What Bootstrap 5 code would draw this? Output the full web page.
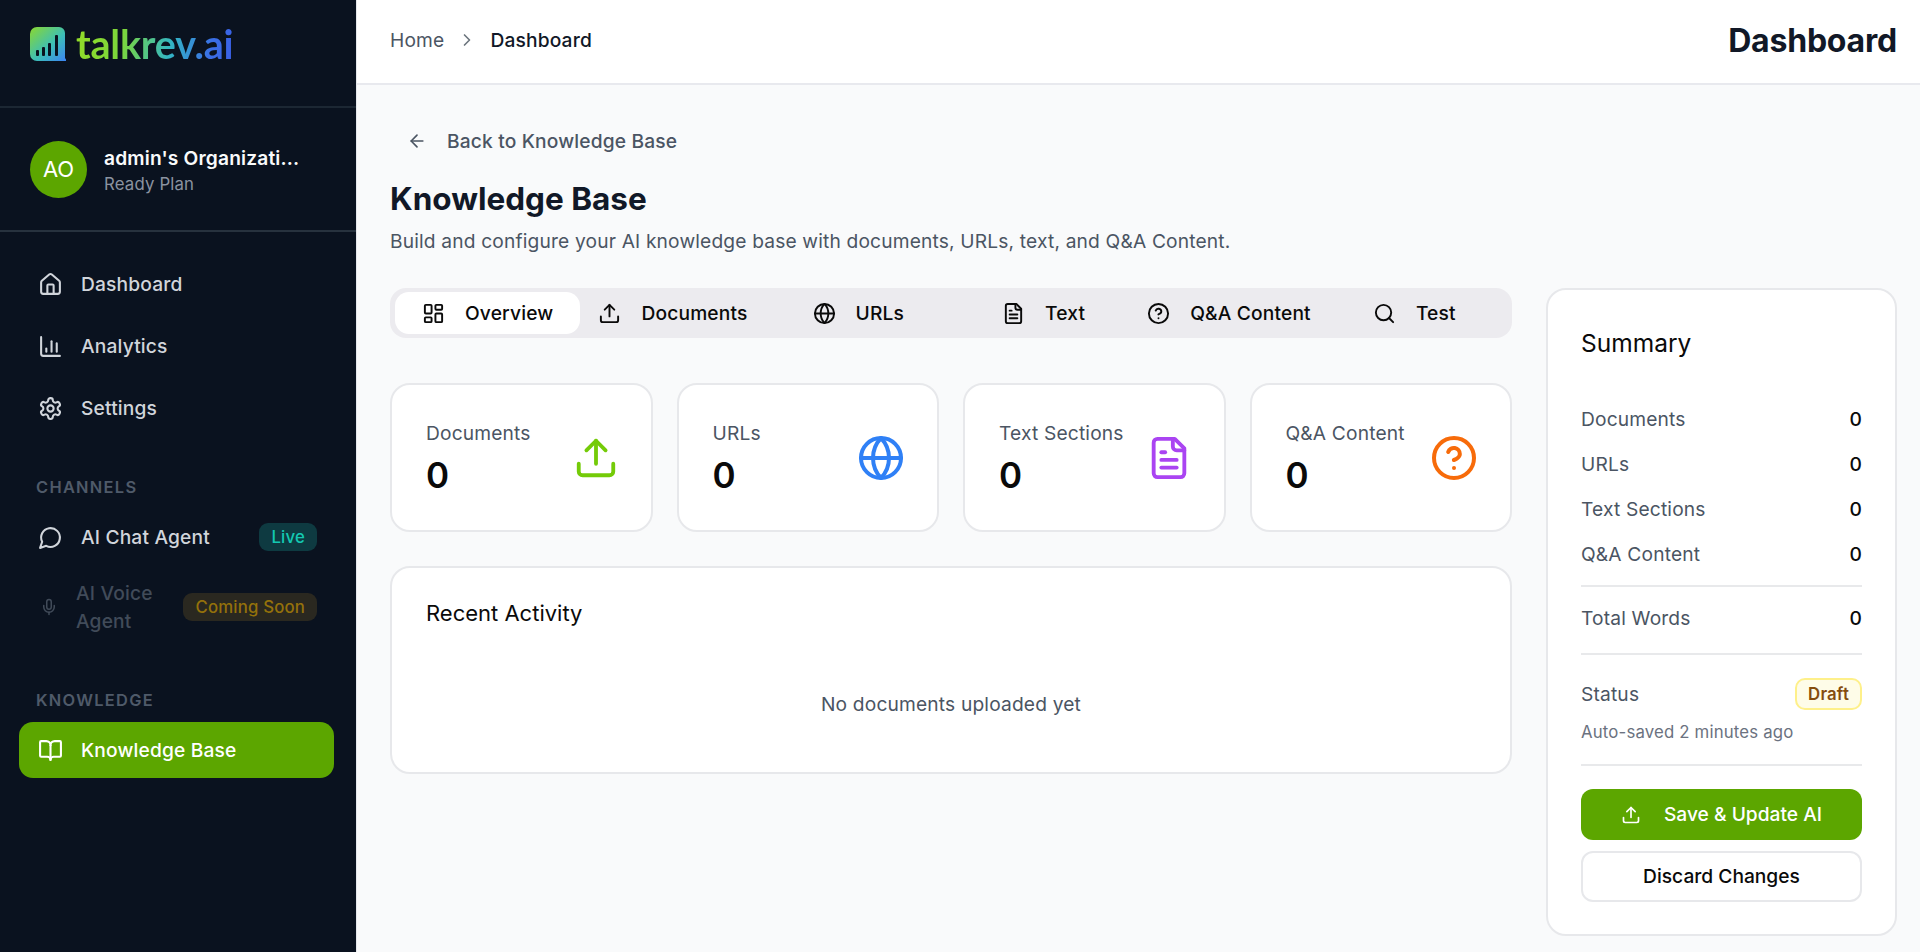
<!DOCTYPE html>
<html lang="en">
<head>
<meta charset="utf-8">
<title>Knowledge Base</title>
<link href="https://cdn.jsdelivr.net/npm/bootstrap@5.3.0/dist/css/bootstrap.min.css" rel="stylesheet">
<style>
html,body{height:952px;overflow:hidden}
body{font-family:Inter,"Liberation Sans",sans-serif;background:#f9fafb;color:#111827;letter-spacing:.01em}
.ico{fill:none;stroke:currentColor;stroke-width:2;stroke-linecap:round;stroke-linejoin:round;flex:none}
.shell{height:952px}
.side{width:357px;flex:none;background:#0a121f;border-right:1px solid #e5e7eb;height:952px}
.brand{height:108px;border-bottom:2px solid #1c2733;padding:27px 0 0 30px;gap:10px}
.brand-word{font-family:Lato,sans-serif;font-weight:700;font-size:39.5px;line-height:34px;letter-spacing:-.2px;background:linear-gradient(100deg,#93dc28 0%,#7bd63c 30%,#33b6c4 60%,#3a6fe6 85%,#3a5fe6 100%);-webkit-background-clip:text;background-clip:text;color:transparent}
.org{height:124px;border-bottom:2px solid #27323e;padding-left:30px;gap:17px}
.avatar{width:57px;height:57px;border-radius:50%;background:#5ca600;color:#fff;font-size:22px;letter-spacing:0}
.org-text{padding-top:4px}
.org-name{font-size:19.2px;font-weight:600;color:#f9fafb;line-height:27px}
.org-plan{font-size:16.8px;color:#8b93a0;line-height:25px}
.navi{height:56px;margin:0 22px 0 19px;padding-left:19px;gap:18px;color:#d1d5db;font-size:19.2px;font-weight:500;text-decoration:none;border-radius:14px}
.navi-first{margin-top:24px}
.navi+.navi{margin-top:6px}
.sec-label{font-size:16.4px;font-weight:600;letter-spacing:1.3px;color:#4f5a69;padding-left:36px;line-height:20px}
.sec-chan{margin-top:41px;margin-bottom:12px}
.sec-know{margin-top:51px;margin-bottom:12px}
.pill-live,.pill-soon{font-size:16.8px;font-weight:500;line-height:28px;border-radius:9px;padding:0 12px;margin-left:auto;margin-right:17px}
.pill-live{background:#0e3a41;color:#14c7b1}
.pill-soon{background:#2a2820;color:#94710b;white-space:nowrap}
.navi+.navi-off{margin-top:10px}
.navi-off{color:#414b59;height:64px;padding-left:21px;gap:18px;line-height:28px}
.navi-on{background:#5ca600;color:#fff}
.topbar{height:85px;background:#fff;border-bottom:2px solid #e8e9ee;padding:0 23px 2px 33px}
.crumbs{gap:13px}
.crumb{font-size:19.2px;color:#4b5563}
.crumb-now{font-size:19.2px;font-weight:500;color:#111827}
.top-title{font-size:32px;font-weight:700;color:#111827;letter-spacing:-.2px}
.work{flex:1;min-width:0}
.pagebody{padding:0 23px 0 33px}
.back{font-size:19.2px;font-weight:500;color:#4b5563;height:40px;margin-top:36px;padding-left:17px;gap:20px}
.pg-title{font-size:31.5px;font-weight:700;color:#111827;line-height:38px;margin:19px 0 0;letter-spacing:0}
.pg-sub{font-size:19.2px;color:#4b5563;line-height:26px;margin:10px 0 0}
.cols{gap:34px;margin-top:34px}
.leftcol{width:1122px;flex:none}
.tabs{background:#ecebef;border-radius:16px;height:50px;padding:4px 5px;display:grid;grid-template-columns:repeat(6,1fr)}
.tabbtn{font-size:19.2px;font-weight:500;color:#0a0a0a;gap:20px;border-radius:14px}
.tab-on{background:#fff}
.panel{background:#fff;border:2px solid #e7e8eb;border-radius:20px}
.stat{height:149px;padding:0 32px 0 34px}
.stat-name{font-size:19.2px;color:#4b5563;line-height:26px}
.stat-num{font-size:35px;font-weight:600;color:#0a0a0a;line-height:42px;margin-top:8px}
.ic-green{color:#74cb08}.ic-blue{color:#2f80f6}.ic-purple{color:#aa44f2}.ic-orange{color:#f76b0a}
.stats{margin-top:21px}
.recent{height:208px;margin-top:34px;padding:0 34px}
.recent-h{font-size:22px;font-weight:400;color:#0a0a0a;line-height:30px;margin-top:30px;letter-spacing:0}
.recent-e{font-size:19.2px;color:#4b5563;line-height:26px;margin-top:63px}
.summary{width:351px;height:648px;flex:none;padding:0 33px}
.sum-h{font-size:24.5px;font-weight:400;color:#0a0a0a;line-height:32px;margin:37px 0 47px;letter-spacing:0}
.sum-row{font-size:19.2px;color:#4b5563;line-height:26px;height:45px}
.sum-row b{font-weight:500;color:#0a0a0a}
.sum-last{height:44px}
.sum-total{height:66px;padding-bottom:5px}
.sum-status{height:auto}
.rule{height:2px;background:#e8e9eb;flex:none}
.status-line{margin-top:23px}
.draft{font-size:16.8px;font-weight:600;line-height:28px;color:#854d0e;background:#fefce8;border:2px solid #fef08a;border-radius:10px;padding:0 11px}
.saved{font-size:16.8px;color:#6b7280;line-height:22px;margin-top:11px}
.rule-low{margin-top:21px}
.btn-save{background:#5ca600;color:#fff;font-size:19.2px;font-weight:500;height:51px;border-radius:12px;gap:23px;border:0;margin-top:23px}
.btn-drop{background:#fff;color:#0a0a0a;font-size:19.2px;font-weight:500;height:51px;border-radius:12px;border:2px solid #e7e8eb;margin-top:11px}
</style>
</head>
<body>
<svg width="0" height="0" class="position-absolute">
<symbol id="i-home" viewBox="0 0 24 24"><path d="M15 21v-8a1 1 0 0 0-1-1h-4a1 1 0 0 0-1 1v8"/><path d="M3 10a2 2 0 0 1 .709-1.528l7-5.999a2 2 0 0 1 2.582 0l7 5.999A2 2 0 0 1 21 10v9a2 2 0 0 1-2 2H5a2 2 0 0 1-2-2z"/></symbol>
<symbol id="i-chart" viewBox="0 0 24 24"><path d="M3 3v16a2 2 0 0 0 2 2h16"/><path d="M8 17v-3"/><path d="M13 17V7"/><path d="M18 17V9"/></symbol>
<symbol id="i-gear" viewBox="0 0 24 24"><path d="M12.22 2h-.44a2 2 0 0 0-2 2v.18a2 2 0 0 1-1 1.73l-.43.25a2 2 0 0 1-2 0l-.15-.08a2 2 0 0 0-2.73.73l-.22.38a2 2 0 0 0 .73 2.73l.15.1a2 2 0 0 1 1 1.72v.51a2 2 0 0 1-1 1.74l-.15.09a2 2 0 0 0-.73 2.73l.22.38a2 2 0 0 0 2.73.73l.15-.08a2 2 0 0 1 2 0l.43.25a2 2 0 0 1 1 1.73V20a2 2 0 0 0 2 2h.44a2 2 0 0 0 2-2v-.18a2 2 0 0 1 1-1.73l.43-.25a2 2 0 0 1 2 0l.15.08a2 2 0 0 0 2.73-.73l.22-.39a2 2 0 0 0-.73-2.73l-.15-.08a2 2 0 0 1-1-1.74v-.5a2 2 0 0 1 1-1.74l.15-.09a2 2 0 0 0 .73-2.73l-.22-.38a2 2 0 0 0-2.73-.73l-.15.08a2 2 0 0 1-2 0l-.43-.25a2 2 0 0 1-1-1.73V4a2 2 0 0 0-2-2z"/><circle cx="12" cy="12" r="3"/></symbol>
<symbol id="i-chat" viewBox="0 0 24 24"><path d="M7.9 20A9 9 0 1 0 4 16.1L2 22Z"/></symbol>
<symbol id="i-mic" viewBox="0 0 24 24"><path d="M12 2a3 3 0 0 0-3 3v7a3 3 0 0 0 6 0V5a3 3 0 0 0-3-3Z"/><path d="M19 10v2a7 7 0 0 1-14 0v-2"/><line x1="12" x2="12" y1="19" y2="22"/></symbol>
<symbol id="i-book" viewBox="0 0 24 24"><path d="M12 7v14"/><path d="M3 18a1 1 0 0 1-1-1V4a1 1 0 0 1 1-1h5a4 4 0 0 1 4 4 4 4 0 0 1 4-4h5a1 1 0 0 1 1 1v13a1 1 0 0 1-1 1h-6a3 3 0 0 0-3 3 3 3 0 0 0-3-3z"/></symbol>
<symbol id="i-grid" viewBox="0 0 24 24"><rect width="7" height="9" x="3" y="3" rx="1"/><rect width="7" height="5" x="14" y="3" rx="1"/><rect width="7" height="9" x="14" y="12" rx="1"/><rect width="7" height="5" x="3" y="16" rx="1"/></symbol>
<symbol id="i-up" viewBox="0 0 24 24"><path d="M21 15v4a2 2 0 0 1-2 2H5a2 2 0 0 1-2-2v-4"/><polyline points="17 8 12 3 7 8"/><line x1="12" x2="12" y1="3" y2="15"/></symbol>
<symbol id="i-globe" viewBox="0 0 24 24"><circle cx="12" cy="12" r="10"/><path d="M12 2a14.5 14.5 0 0 0 0 20 14.5 14.5 0 0 0 0-20"/><path d="M2 12h20"/></symbol>
<symbol id="i-file" viewBox="0 0 24 24"><path d="M15 2H6a2 2 0 0 0-2 2v16a2 2 0 0 0 2 2h12a2 2 0 0 0 2-2V7Z"/><path d="M14 2v4a2 2 0 0 0 2 2h4"/><path d="M10 9H8"/><path d="M16 13H8"/><path d="M16 17H8"/></symbol>
<symbol id="i-help" viewBox="0 0 24 24"><circle cx="12" cy="12" r="10"/><path d="M9.09 9a3 3 0 0 1 5.83 1c0 2-3 3-3 3"/><path d="M12 17h.01"/></symbol>
<symbol id="i-search" viewBox="0 0 24 24"><circle cx="11" cy="11" r="8"/><path d="m21 21-4.3-4.3"/></symbol>
<symbol id="i-left" viewBox="0 0 24 24"><path d="m12 19-7-7 7-7"/><path d="M19 12H5"/></symbol>
<symbol id="i-right" viewBox="0 0 24 24"><path d="m9 18 6-6-6-6"/></symbol>
</svg>
<div class="d-flex shell">
  <aside class="side">
    <div class="brand d-flex align-items-start">
      <svg width="36" height="35" viewBox="0 0 36 35">
        <defs><linearGradient id="lg" x1="0" y1="0" x2="1" y2="1"><stop offset="0" stop-color="#8bd82f"/><stop offset=".55" stop-color="#3dbfb5"/><stop offset="1" stop-color="#3b82f6"/></linearGradient></defs>
        <path d="M7 0h22a6 6 0 0 1 6 6v25l2 3H7a7 7 0 0 1-7-7V7a7 7 0 0 1 7-7z" fill="url(#lg)"/>
        <g fill="#0a121f"><rect x="6" y="23" width="3" height="6" rx="1"/><rect x="12" y="20" width="3" height="9" rx="1"/><rect x="18" y="16" width="3" height="13" rx="1"/><rect x="25" y="8" width="3" height="21" rx="1"/></g>
      </svg>
      <span class="brand-word">talkrev.ai</span>
    </div>
    <div class="org d-flex align-items-center">
      <div class="avatar d-flex align-items-center justify-content-center">AO</div>
      <div class="org-text">
        <div class="org-name">admin's Organizati...</div>
        <div class="org-plan">Ready Plan</div>
      </div>
    </div>
    <a class="navi navi-first d-flex align-items-center" href="#"><svg class="ico" width="25" height="25"><use href="#i-home"/></svg>Dashboard</a>
    <a class="navi d-flex align-items-center" href="#"><svg class="ico" width="25" height="25"><use href="#i-chart"/></svg>Analytics</a>
    <a class="navi d-flex align-items-center" href="#"><svg class="ico" width="25" height="25"><use href="#i-gear"/></svg>Settings</a>
    <div class="sec-label sec-chan text-uppercase">Channels</div>
    <a class="navi d-flex align-items-center" href="#"><svg class="ico" width="25" height="25"><use href="#i-chat"/></svg>AI Chat Agent<span class="pill-live">Live</span></a>
    <a class="navi navi-off d-flex align-items-center" href="#"><svg class="ico" width="18" height="24"><use href="#i-mic"/></svg><span>AI Voice<br>Agent</span><span class="pill-soon">Coming Soon</span></a>
    <div class="sec-label sec-know text-uppercase">Knowledge</div>
    <a class="navi navi-on d-flex align-items-center" href="#"><svg class="ico" width="25" height="25"><use href="#i-book"/></svg>Knowledge Base</a>
  </aside>
  <main class="work">
    <header class="topbar d-flex align-items-center justify-content-between">
      <nav class="d-flex align-items-center crumbs">
        <span class="crumb">Home</span>
        <svg class="ico text-secondary" width="20" height="20"><use href="#i-right"/></svg>
        <span class="crumb-now">Dashboard</span>
      </nav>
      <div class="top-title">Dashboard</div>
    </header>
    <div class="pagebody">
      <div class="back d-flex align-items-center"><svg class="ico" width="20" height="20"><use href="#i-left"/></svg>Back to Knowledge Base</div>
      <h1 class="pg-title">Knowledge Base</h1>
      <p class="pg-sub">Build and configure your AI knowledge base with documents, URLs, text, and Q&amp;A Content.</p>
      <div class="d-flex align-items-start cols">
        <div class="leftcol">
          <div class="tabs">
            <div class="tabbtn tab-on d-flex align-items-center justify-content-center"><svg class="ico" width="23" height="23"><use href="#i-grid"/></svg>Overview</div>
            <div class="tabbtn d-flex align-items-center justify-content-center"><svg class="ico" width="23" height="23"><use href="#i-up"/></svg>Documents</div>
            <div class="tabbtn d-flex align-items-center justify-content-center"><svg class="ico" width="23" height="23"><use href="#i-globe"/></svg>URLs</div>
            <div class="tabbtn d-flex align-items-center justify-content-center"><svg class="ico" width="23" height="23"><use href="#i-file"/></svg>Text</div>
            <div class="tabbtn d-flex align-items-center justify-content-center"><svg class="ico" width="23" height="23"><use href="#i-help"/></svg>Q&amp;A Content</div>
            <div class="tabbtn d-flex align-items-center justify-content-center"><svg class="ico" width="23" height="23"><use href="#i-search"/></svg>Test</div>
          </div>
          <div class="row g-4 stats">
            <div class="col-3"><div class="panel stat d-flex align-items-center justify-content-between"><div><div class="stat-name">Documents</div><div class="stat-num">0</div></div><svg class="ico ic-green" width="46" height="46"><use href="#i-up"/></svg></div></div>
            <div class="col-3"><div class="panel stat d-flex align-items-center justify-content-between"><div><div class="stat-name">URLs</div><div class="stat-num">0</div></div><svg class="ico ic-blue" width="48" height="48"><use href="#i-globe"/></svg></div></div>
            <div class="col-3"><div class="panel stat d-flex align-items-center justify-content-between"><div><div class="stat-name">Text Sections</div><div class="stat-num">0</div></div><svg class="ico ic-purple" width="46" height="46"><use href="#i-file"/></svg></div></div>
            <div class="col-3"><div class="panel stat d-flex align-items-center justify-content-between"><div><div class="stat-name">Q&amp;A Content</div><div class="stat-num">0</div></div><svg class="ico ic-orange" width="48" height="48"><use href="#i-help"/></svg></div></div>
          </div>
          <div class="panel recent">
            <div class="recent-h">Recent Activity</div>
            <div class="recent-e text-center">No documents uploaded yet</div>
          </div>
        </div>
        <div class="panel summary d-flex flex-column">
          <div class="sum-h">Summary</div>
          <div class="sum-row d-flex justify-content-between"><span>Documents</span><b>0</b></div>
          <div class="sum-row d-flex justify-content-between"><span>URLs</span><b>0</b></div>
          <div class="sum-row d-flex justify-content-between"><span>Text Sections</span><b>0</b></div>
          <div class="sum-row sum-last d-flex justify-content-between"><span>Q&amp;A Content</span><b>0</b></div>
          <div class="rule"></div>
          <div class="sum-row sum-total d-flex justify-content-between align-items-center"><span>Total Words</span><b>0</b></div>
          <div class="rule"></div>
          <div class="status-line d-flex justify-content-between align-items-center"><span class="sum-row sum-status">Status</span><span class="draft">Draft</span></div>
          <div class="saved">Auto-saved 2 minutes ago</div>
          <div class="rule rule-low"></div>
          <button class="btn btn-save d-flex align-items-center justify-content-center"><svg class="ico" width="20" height="20"><use href="#i-up"/></svg>Save &amp; Update AI</button>
          <button class="btn btn-drop">Discard Changes</button>
        </div>
      </div>
    </div>
  </main>
</div>
</body>
</html>
